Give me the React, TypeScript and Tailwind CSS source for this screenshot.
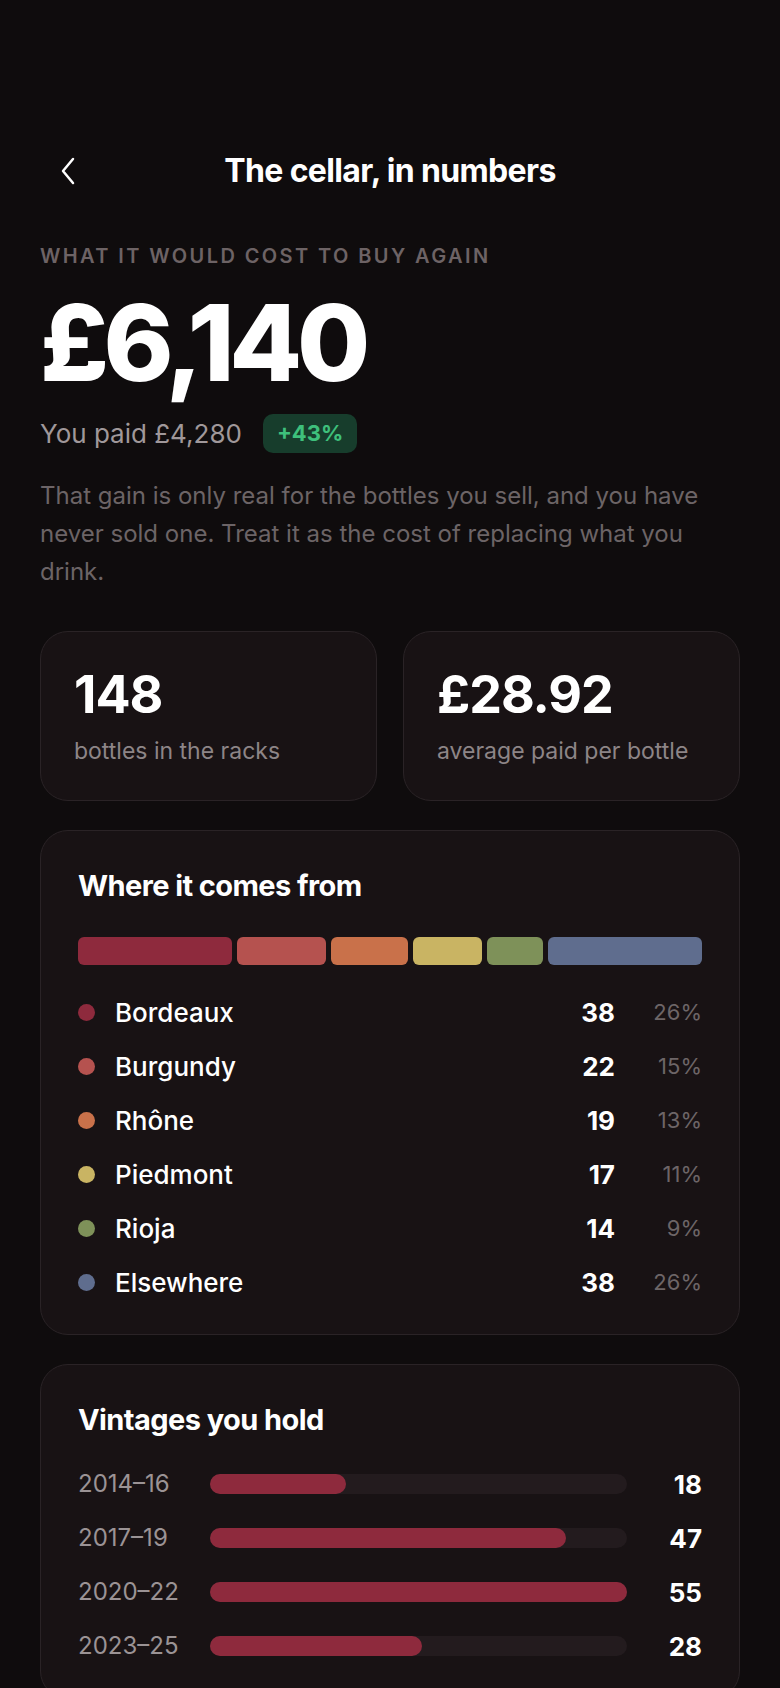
import React from "react";

type Region = { name: string; count: number; pct: string; color: string };

const regions: Region[] = [
  { name: "Bordeaux", count: 38, pct: "26%", color: "#8e2a3d" },
  { name: "Burgundy", count: 22, pct: "15%", color: "#b5524f" },
  { name: "Rhône", count: 19, pct: "13%", color: "#c9714a" },
  { name: "Piedmont", count: 17, pct: "11%", color: "#c9b463" },
  { name: "Rioja", count: 14, pct: "9%", color: "#7e9159" },
  { name: "Elsewhere", count: 38, pct: "26%", color: "#5f6d8e" },
];

const vintages = [
  { label: "2014–16", count: 18 },
  { label: "2017–19", count: 47 },
  { label: "2020–22", count: 55 },
  { label: "2023–25", count: 28 },
];

const maxVintage = Math.max(...vintages.map((v) => v.count));

function BackIcon() {
  return (
    <svg width="16" height="28" viewBox="0 0 16 28" fill="none">
      <polyline
        points="13,2 3,14 13,26"
        stroke="white"
        strokeWidth="2.5"
        strokeLinecap="round"
        strokeLinejoin="round"
      />
    </svg>
  );
}

function StatCard({ value, label }: { value: string; label: string }) {
  return (
    <div className="flex-1 rounded-[28px] border border-[#2a2326] bg-[#181214] px-[33px] pt-[37px] pb-[35px]">
      <div className="text-[52px] font-bold leading-none tracking-[-0.02em] text-white">{value}</div>
      <div className="mt-[16px] text-[23px] leading-[28px] text-[#8d8587]">{label}</div>
    </div>
  );
}

export default function App() {
  return (
    <div className="min-h-screen bg-[#0f0c0d] font-['Inter','Noto_Sans',sans-serif] text-white">
      <div className="px-[40px] pt-[135px] pb-[40px]">
        {/* header */}
        <div className="relative flex h-[72px] items-center justify-center">
          <button className="absolute left-[20px] top-1/2 -translate-y-1/2">
            <BackIcon />
          </button>
          <h1 className="text-[32px] font-bold leading-[38px] tracking-[-0.02em]">The cellar, in numbers</h1>
        </div>

        <p className="mt-[37px] text-[20px] font-semibold uppercase leading-[24px] tracking-[0.12em] text-[#6d6365]">
          What it would cost to buy again
        </p>
        <div className="mt-[22px] text-[106px] font-extrabold leading-none tracking-[-0.05em]">£6,140</div>

        <div className="mt-[18px] flex items-center gap-[21px]">
          <span className="text-[26px] text-[#a0989a]">You paid £4,280</span>
          <span className="flex h-[39px] items-center rounded-[10px] bg-[#173d2c] px-[14px] text-[22px] font-bold text-[#3ec07c]">
            +43%
          </span>
        </div>

        <p className="mt-[24px] text-[24px] leading-[38px] text-[#6c6466]">
          That gain is only real for the bottles you sell, and you have never sold one. Treat it as the cost of
          replacing what you drink.
        </p>

        <div className="mt-[40px] flex gap-[26px]">
          <StatCard value="148" label="bottles in the racks" />
          <StatCard value="£28.92" label="average paid per bottle" />
        </div>

        {/* regions */}
        <div className="mt-[29px] rounded-[28px] border border-[#2a2326] bg-[#181214] p-[37px] pt-[37px]">
          <h2 className="text-[29px] font-bold leading-[36px] tracking-[-0.02em]">Where it comes from</h2>
          <div className="mt-[33px] flex h-[28px] gap-[5px]">
            {regions.map((r) => (
              <div key={r.name} className="rounded-[6px]" style={{ flexGrow: r.count, flexBasis: 0, backgroundColor: r.color }} />
            ))}
          </div>
          <div className="mt-[32px] flex flex-col gap-[24px]">
            {regions.map((r) => (
              <div key={r.name} className="flex h-[30px] items-center">
                <span className="h-[17px] w-[17px] shrink-0 rounded-full" style={{ backgroundColor: r.color }} />
                <span className="ml-[20px] flex-1 text-[26px] font-medium">{r.name}</span>
                <span className="text-[26px] font-bold">{r.count}</span>
                <span className="w-[87px] text-right text-[22px] text-[#6d6567]">{r.pct}</span>
              </div>
            ))}
          </div>
        </div>

        {/* vintages */}
        <div className="mt-[29px] rounded-[28px] border border-[#2a2326] bg-[#181214] p-[37px] pt-[37px]">
          <h2 className="text-[29px] font-bold leading-[36px] tracking-[-0.02em]">Vintages you hold</h2>
          <div className="mt-[31px] flex flex-col gap-[24px]">
            {vintages.map((v) => (
              <div key={v.label} className="flex h-[30px] items-center">
                <span className="w-[132px] shrink-0 text-[24px] text-[#9b9395]">{v.label}</span>
                <div className="h-[20px] flex-1 rounded-full bg-[#231b1e]">
                  <div
                    className="h-full rounded-full bg-[#8e2a3d]"
                    style={{ width: `${(v.count / maxVintage) * 100}%` }}
                  />
                </div>
                <span className="w-[75px] shrink-0 text-right text-[26px] font-bold">{v.count}</span>
              </div>
            ))}
          </div>
        </div>
      </div>
    </div>
  );
}
